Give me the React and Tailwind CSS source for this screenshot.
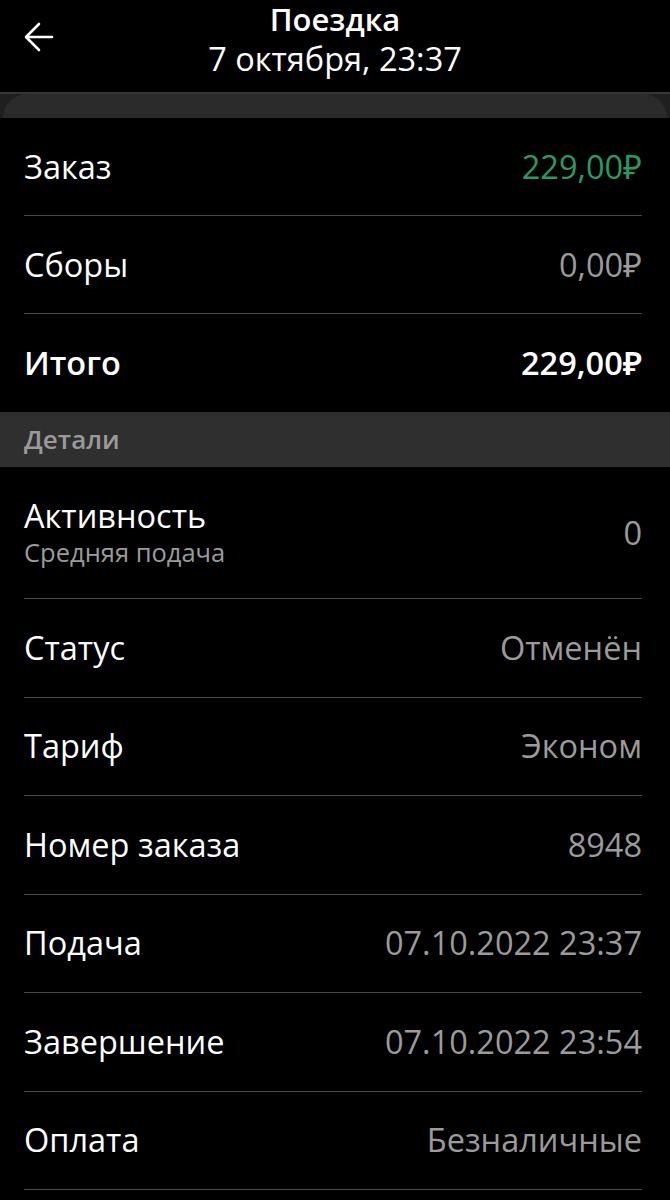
import React from "react";

const font = { fontFamily: '"Open Sans", "Noto Sans", sans-serif' };

function Row({ label, value, valueClass = "text-[#9b9b9b]", labelClass = "", border = true, sub, h = "h-[98.5px]" }) {
  return (
    <div className="pl-6 pr-7">
      <div
        className={
          "flex items-center justify-between " +
          (sub ? "h-[132px] " : h + " ") +
          (border ? "border-b border-[#4a4a4a]" : "")
        }
      >
        <div className="flex flex-col">
          <span className={"text-[32.5px] leading-[38px] text-white " + labelClass}>{label}</span>
          {sub && <span className="text-[25.5px] leading-[34px] text-[#9b9b9b]">{sub}</span>}
        </div>
        <span className={"text-[32.5px] leading-[38px] " + valueClass}>{value}</span>
      </div>
    </div>
  );
}

export default function App() {
  return (
    <div className="w-[670px] h-[1200px] bg-black overflow-hidden" style={font}>
      <div className="relative h-[92px] flex flex-col items-center">
        <svg className="absolute left-[24px] top-[22px]" width="30" height="30" viewBox="0 0 30 30" fill="none">
          <path d="M28 15H3M15 2L2 15L15 28" stroke="white" strokeWidth="2.6" strokeLinecap="round" strokeLinejoin="round" />
        </svg>
        <span className="text-white text-[31px] font-semibold leading-[38px]">Поездка</span>
        <span className="text-white text-[32.5px] leading-[42px]">7 октября, 23:37</span>
      </div>
      <div className="h-[26px] bg-[#1f1f1f] border-t-2 border-[#363636] px-[3px]">
        <div className="h-full bg-[#2b2b2b] rounded-t-[36px]"></div>
      </div>
      <Row label="Заказ" value="229,00₽" valueClass="text-[#2a9a64]" h="h-[98px]" />
      <Row label="Сборы" value="0,00₽" h="h-[98px]" />
      <Row label="Итого" value="229,00₽" valueClass="text-white font-semibold" labelClass="font-semibold" border={false} h="h-[98px]" />
      <div className="h-[55px] bg-[#2f2f2f] pl-6 flex items-center">
        <span className="text-[26px] font-semibold text-[#9a9a9a]">Детали</span>
      </div>
      <Row label="Активность" sub="Средняя подача" value="0" />
      <Row label="Статус" value="Отменён" />
      <Row label="Тариф" value="Эконом" />
      <Row label="Номер заказа" value="8948" />
      <Row label="Подача" value="07.10.2022 23:37" />
      <Row label="Завершение" value="07.10.2022 23:54" />
      <Row label="Оплата" value="Безналичные" />
    </div>
  );
}
